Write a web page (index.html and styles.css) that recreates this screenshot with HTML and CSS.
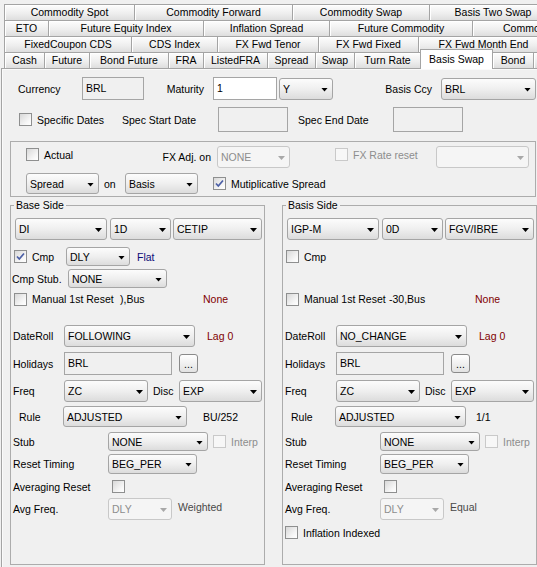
FILE: index.html
```html
<!DOCTYPE html>
<html>
<head>
    <link rel="stylesheet" href="styles.css">
</head>

<body>
    <div class="tabs">
        <div class="tab-row run1">
            <div class="tab">Commodity Spot</div>
            <div class="tab">Commodity Forward</div>
            <div class="tab">Commodity Swap</div>
            <div class="tab">Basis Two Swap</div>
        </div>
        <div class="tab-row run2">
            <div class="tab">ETO</div>
            <div class="tab">Future Equity Index</div>
            <div class="tab">Inflation Spread</div>
            <div class="tab">Future Commodity</div>
            <div class="tab">Commodity Index</div>
        </div>
        <div class="tab-row run3">
            <div class="tab">FixedCoupon CDS</div>
            <div class="tab">CDS Index</div>
            <div class="tab">FX Fwd Tenor</div>
            <div class="tab">FX Fwd Fixed</div>
            <div class="tab">FX Fwd Month End</div>
        </div>
        <div class="tab-row run4">
            <div class="tab">Cash</div>
            <div class="tab">Future</div>
            <div class="tab">Bond Future</div>
            <div class="tab">FRA</div>
            <div class="tab">ListedFRA</div>
            <div class="tab">Spread</div>
            <div class="tab">Swap</div>
            <div class="tab">Turn Rate</div>
            <div class="tab sel">Basis Swap</div>
            <div class="tab">Bond</div>
            <div class="tab"></div>
        </div>
    </div>

    <div class="content">
        <div class="row head1">
            <span class="lbl cur-lbl">Currency</span>
            <div class="field cur">BRL</div>
            <span class="lbl mat-lbl">Maturity</span>
            <div class="field edit mat">1</div>
            <div class="combo unit"><span>Y</span></div>
            <span class="lbl ccy-lbl">Basis Ccy</span>
            <div class="combo ccy"><span>BRL</span></div>
        </div>

        <div class="row head2">
            <label class="ck spec"><span class="chk"></span>Specific Dates</label>
            <span class="lbl sd-lbl">Spec Start Date</span>
            <div class="field date"></div>
            <span class="lbl ed-lbl">Spec End Date</span>
            <div class="field date"></div>
        </div>

        <div class="opts">
            <div class="row opt-a">
                <label class="ck actual"><span class="chk"></span>Actual</label>
                <span class="lbl fxadj-lbl">FX Adj. on</span>
                <div class="combo off fxadj"><span>NONE</span></div>
                <label class="ck off fxreset"><span class="chk off"></span>FX Rate reset</label>
                <div class="combo off fxrate"><span></span></div>
            </div>
            <div class="row opt-b">
                <div class="combo sprd"><span>Spread</span></div>
                <span class="lbl on-lbl">on</span>
                <div class="combo sprd"><span>Basis</span></div>
                <label class="ck mult"><span class="chk"><svg width="11" height="11" viewBox="0 0 11 11"><path d="M2 5.5 L4.3 8 L9 2.5" fill="none" stroke="#4b5fa6" stroke-width="1.7"/></svg></span>Mutiplicative Spread</label>
            </div>
        </div>

        <div class="sides">
            <fieldset class="side">
                <legend>Base Side</legend>
                <div class="row s-sel">
                    <div class="combo c-idx"><span>DI</span></div>
                    <div class="combo c-ten"><span>1D</span></div>
                    <div class="combo c-src"><span>CETIP</span></div>
                </div>
                <div class="row s-cmp">
                    <label class="ck cmp"><span class="chk"><svg width="11" height="11" viewBox="0 0 11 11"><path d="M2 5.5 L4.3 8 L9 2.5" fill="none" stroke="#4b5fa6" stroke-width="1.7"/></svg></span>Cmp</label>
                    <div class="combo small c-dly"><span>DLY</span></div>
                    <span class="lbl flat">Flat</span>
                </div>
                <div class="row s-cstub">
                    <span class="lbl cstub-lbl">Cmp Stub.</span>
                    <div class="combo small c-cstub"><span>NONE</span></div>
                </div>
                <div class="row s-man">
                    <label class="ck manual"><span class="chk"></span>Manual 1st Reset</label>
                    <span class="lbl bus">),Bus</span>
                    <span class="lbl red">None</span>
                </div>
                <div class="row s-roll">
                    <span class="lbl k51">DateRoll</span>
                    <div class="combo c-roll"><span>FOLLOWING</span></div>
                    <span class="lbl red lag">Lag 0</span>
                </div>
                <div class="row s-hol">
                    <span class="lbl k51">Holidays</span>
                    <div class="field hol">BRL</div>
                    <div class="dots">...</div>
                </div>
                <div class="row s-freq">
                    <span class="lbl k51">Freq</span>
                    <div class="combo c-freq"><span>ZC</span></div>
                    <span class="lbl disc">Disc</span>
                    <div class="combo c-disc"><span>EXP</span></div>
                </div>
                <div class="row s-rule">
                    <span class="lbl k44">Rule</span>
                    <div class="combo c-rule"><span>ADJUSTED</span></div>
                    <span class="lbl dc">BU/252</span>
                </div>
                <div class="row s-stub">
                    <span class="lbl k95">Stub</span>
                    <div class="combo small c-stub"><span>NONE</span></div>
                    <label class="ck off interp"><span class="chk off"></span>Interp</label>
                </div>
                <div class="row s-reset">
                    <span class="lbl k95">Reset Timing</span>
                    <div class="combo c-reset"><span>BEG_PER</span></div>
                </div>
                <div class="row s-avg">
                    <span class="lbl k95">Averaging Reset</span>
                    <span class="chk avg-chk"></span>
                </div>
                <div class="row s-avgf">
                    <span class="lbl k95">Avg Freq.</span>
                    <div class="combo off c-avgf"><span>DLY</span></div>
                    <span class="lbl weight">Weighted</span>
                </div>
            </fieldset>

            <fieldset class="side">
                <legend>Basis Side</legend>
                <div class="row s-sel">
                    <div class="combo c-idx"><span>IGP-M</span></div>
                    <div class="combo c-ten"><span>0D</span></div>
                    <div class="combo c-src"><span>FGV/IBRE</span></div>
                </div>
                <div class="row s-cmp">
                    <label class="ck cmp"><span class="chk"></span>Cmp</label>
                </div>
                <div class="row s-cstub"></div>
                <div class="row s-man">
                    <label class="ck manual"><span class="chk"></span>Manual 1st Reset</label>
                    <span class="lbl bus basis-bus">-30,Bus</span>
                    <span class="lbl red">None</span>
                </div>
                <div class="row s-roll">
                    <span class="lbl k51">DateRoll</span>
                    <div class="combo c-roll"><span>NO_CHANGE</span></div>
                    <span class="lbl red lag">Lag 0</span>
                </div>
                <div class="row s-hol">
                    <span class="lbl k51">Holidays</span>
                    <div class="field hol">BRL</div>
                    <div class="dots">...</div>
                </div>
                <div class="row s-freq">
                    <span class="lbl k51">Freq</span>
                    <div class="combo c-freq"><span>ZC</span></div>
                    <span class="lbl disc">Disc</span>
                    <div class="combo c-disc"><span>EXP</span></div>
                </div>
                <div class="row s-rule">
                    <span class="lbl k44">Rule</span>
                    <div class="combo c-rule wide"><span>ADJUSTED</span></div>
                    <span class="lbl dc narrow">1/1</span>
                </div>
                <div class="row s-stub">
                    <span class="lbl k95">Stub</span>
                    <div class="combo small c-stub"><span>NONE</span></div>
                    <label class="ck off interp"><span class="chk off"></span>Interp</label>
                </div>
                <div class="row s-reset">
                    <span class="lbl k95">Reset Timing</span>
                    <div class="combo c-reset"><span>BEG_PER</span></div>
                </div>
                <div class="row s-avg">
                    <span class="lbl k95">Averaging Reset</span>
                    <span class="chk avg-chk"></span>
                </div>
                <div class="row s-avgf">
                    <span class="lbl k95">Avg Freq.</span>
                    <div class="combo off c-avgf"><span>DLY</span></div>
                    <span class="lbl weight">Equal</span>
                </div>
                <div class="row s-infl">
                    <label class="ck"><span class="chk"></span>Inflation Indexed</label>
                </div>
            </fieldset>
        </div>
    </div>
</body>

</html>
```

FILE: styles.css
```css
body{
    margin: 0;
    width: 537px;
    height: 567px;
    overflow: hidden;
    background-color: #f0f0f0;
    font-family: "Liberation Sans", Arial, sans-serif;
    font-size: 10.5px;
    color: #000;
}

/* tab runs */
.tabs{
    padding-top: 4px;
    width: 533px;
}
.tab-row{
    display: flex;
    height: 16px;
    margin-left: 4px;
}
.tab{
    box-sizing: border-box;
    flex: none;
    height: 16px;
    line-height: 15px;
    text-align: center;
    white-space: nowrap;
    overflow: hidden;
    border-top: 1px solid #a4a4a4;
    border-left: 1px solid #a4a4a4;
    background: linear-gradient(#fdfdfd, #ededed 60%, #dedede);
    box-shadow: inset 1px 1px 0 #fff;
}
.run1 .tab:nth-child(1){ width: 130px; }
.run1 .tab:nth-child(2){ width: 158px; }
.run1 .tab:nth-child(3){ width: 137px; }
.run1 .tab:nth-child(4){ width: 127px; }

.run2 .tab:nth-child(1){ width: 44px; }
.run2 .tab:nth-child(2){ width: 155px; }
.run2 .tab:nth-child(3){ width: 126px; }
.run2 .tab:nth-child(4){ width: 143px; }
.run2 .tab:nth-child(5){ width: 127px; text-align: left; padding-left: 30px; }

.run3 .tab:nth-child(1){ width: 127px; }
.run3 .tab:nth-child(2){ width: 86px; }
.run3 .tab:nth-child(3){ width: 101px; }
.run3 .tab:nth-child(4){ width: 100px; }
.run3 .tab:nth-child(5){ width: 130px; }

.run4 .tab:nth-child(1){ width: 40px; }
.run4 .tab:nth-child(2){ width: 45px; }
.run4 .tab:nth-child(3){ width: 79px; }
.run4 .tab:nth-child(4){ width: 35px; }
.run4 .tab:nth-child(5){ width: 64px; }
.run4 .tab:nth-child(6){ width: 48px; }
.run4 .tab:nth-child(7){ width: 39px; }
.run4 .tab:nth-child(8){ width: 66px; }
.run4 .tab:nth-child(9){ width: 73px; }
.run4 .tab:nth-child(10){ width: 40px; }
.run4 .tab:nth-child(11){ width: 60px; }

.tab.sel{
    position: relative;
    z-index: 1;
    height: 20px;
    margin-top: -3px;
    margin-bottom: -1px;
    padding-top: 1px;
    line-height: 16px;
    background: #fff;
    border-right: 1px solid #a4a4a4;
    box-shadow: none;
}
.tab.sel + .tab{
    border-left: none;
}

/* content panel */
.content{
    height: 499px;
    margin-left: 1px;
    border-top: 1px solid #a4a4a4;
    border-left: 1px solid #a4a4a4;
    box-shadow: inset 1px 1px 0 #fafafa;
}

.row{
    display: flex;
    align-items: center;
    flex: none;
}
.lbl{
    flex: none;
    box-sizing: border-box;
    white-space: nowrap;
}

/* widgets */
.combo{
    box-sizing: border-box;
    display: flex;
    align-items: center;
    flex: none;
    height: 21px;
    padding-left: 3px;
    border: 1px solid #a5a5a5;
    border-radius: 3px;
    background: linear-gradient(#fcfcfc, #efefef 50%, #dcdcdc);
}
.combo span{
    flex: 1;
    overflow: hidden;
    white-space: nowrap;
}
.combo::after{
    content: "";
    width: 7px;
    height: 4px;
    margin: 2px 4px 0 0;
    background-color: #000;
    clip-path: polygon(0 0, 100% 0, 50% 100%);
}
.combo.small{
    height: 19px;
}
.combo.off{
    color: #8d8d8d;
    border-color: #c8c8c8;
    background: #f5f5f5;
}
.combo.off::after{
    background-color: #a8a8a8;
}

.field{
    box-sizing: border-box;
    flex: none;
    height: 23px;
    padding-left: 3px;
    line-height: 21px;
    border: 1px solid #a5a5a5;
}
.field.edit{
    background-color: #fff;
}

.ck{
    display: flex;
    align-items: center;
    gap: 5px;
    flex: none;
    box-sizing: border-box;
    white-space: nowrap;
}
.ck.off{
    color: #8d8d8d;
}
.chk{
    box-sizing: border-box;
    flex: none;
    width: 13px;
    height: 13px;
    border: 1px solid #8e8f8f;
    background: linear-gradient(135deg, #d8d8d8, #f7f7f7 70%, #fff);
}
.chk svg{
    display: block;
}
.chk.off{
    border-color: #c9c9c9;
    background: #f7f7f7;
}

.dots{
    box-sizing: border-box;
    flex: none;
    width: 19px;
    height: 19px;
    margin-left: 7px;
    border: 1px solid #8a8a8a;
    border-radius: 3px;
    background: linear-gradient(#fff, #e2e2e2);
    text-align: center;
    line-height: 19px;
}

/* header rows */
.head1{
    height: 23px;
    margin-top: 8px;
    padding-left: 16px;
}
.cur-lbl{ width: 64px; }
.cur{ width: 62px; }
.mat-lbl{ width: 60px; text-align: right; }
.mat{ width: 64px; margin-left: 9px; }
.unit{ width: 54px; height: 22px; margin-left: 2px; }
.ccy-lbl{ width: 99px; text-align: right; }
.ccy{ width: 95px; height: 22px; margin-left: 9px; }

.head2{
    height: 25px;
    margin-top: 7px;
    padding-left: 17px;
}
.spec{ width: 103px; }
.sd-lbl{ width: 96px; }
.date{ width: 70px; height: 25px; }
.ed-lbl{ width: 95px; margin-left: 10px; }

/* options box */
.opts{
    box-sizing: border-box;
    width: 526px;
    height: 56px;
    margin: 9px 0 0 8px;
    padding-top: 4px;
    border: 1px solid #acacac;
}
.opt-a{
    height: 22px;
    padding-left: 15px;
}
.actual{ width: 104px; align-self: flex-start; margin-top: 2px; }
.fxadj-lbl{ width: 81px; text-align: right; }
.fxadj{ width: 73px; height: 22px; margin-left: 6px; }
.fxreset{ width: 101px; margin-left: 45px; align-self: flex-start; margin-top: 2px; }
.fxrate{ width: 93px; height: 22px; }
.opt-b{
    height: 21px;
    margin-top: 5px;
    padding-left: 15px;
}
.sprd{ width: 73px; }
.on-lbl{ width: 26px; padding-left: 5px; }
.mult{ margin-left: 15px; }

/* side groups */
.sides{
    display: grid;
    grid-template-columns: 255px 255px;
    column-gap: 17px;
    margin: 2px 0 0 8px;
}
.side{
    box-sizing: border-box;
    height: 366px;
    min-width: 0;
    margin: 0;
    padding: 6px 0 0 0;
    border: 1px solid #acacac;
}
.side legend{
    margin-left: 3px;
    padding: 0 2px;
    line-height: 13px;
}

.s-sel{ height: 22px; padding-left: 4px; }
.c-idx{ width: 92px; height: 22px; }
.c-ten{ width: 61px; height: 22px; margin-left: 3px; }
.c-src{ width: 89px; height: 22px; margin-left: 2px; }

.s-cmp{ height: 19px; margin-top: 7px; padding-left: 3px; }
.cmp{ width: 52px; }
.c-dly{ width: 64px; height: 17px; }
.flat{ margin-left: 7px; color: #0c0c78; }

.s-cstub{ height: 19px; margin-top: 3px; padding-left: 1px; }
.cstub-lbl{ width: 56px; }
.c-cstub{ width: 99px; }

.s-man{ height: 16px; margin-top: 3px; padding-left: 3px; }
.manual{ width: 106px; }
.bus{ width: 83px; }
.basis-bus{ width: 86px; margin-left: -3px; }
.red{ color: #800000; }

.s-roll{ height: 22px; margin-top: 18px; padding-left: 2px; }
.k51{ width: 51px; }
.k44{ width: 44px; }
.k95{ width: 95px; }
.c-roll{ width: 131px; height: 22px; }
.lag{ margin-left: 12px; }

.s-hol{ height: 23px; margin-top: 5px; padding-left: 2px; }
.hol{ width: 108px; }

.s-freq{ height: 22px; margin-top: 5px; padding-left: 2px; }
.c-freq{ width: 84px; height: 22px; }
.disc{ width: 31px; padding-left: 5px; }
.c-disc{ width: 83px; height: 22px; }

.s-rule{ height: 21px; margin-top: 4px; padding-left: 8px; }
.c-rule{ width: 124px; }
.c-rule.wide{ width: 131px; }
.dc{ margin-left: 16px; }
.dc.narrow{ margin-left: 10px; }

.s-stub{ height: 19px; margin-top: 5px; padding-left: 2px; }
.c-stub{ width: 100px; }
.interp{ margin-left: 5px; }

.s-reset{ height: 21px; margin-top: 2px; padding-left: 2px; }
.c-reset{ width: 89px; height: 20px; }

.s-avg{ height: 15px; margin-top: 5px; padding-left: 2px; }
.avg-chk{ margin-left: 4px; }

.s-avgf{ height: 22px; margin-top: 4px; padding-left: 2px; }
.c-avgf{ width: 64px; height: 22px; }
.weight{ margin: 0 0 4px 6px; color: #484848; }

.s-infl{ height: 15px; margin-top: 5px; padding-left: 2px; }
```
